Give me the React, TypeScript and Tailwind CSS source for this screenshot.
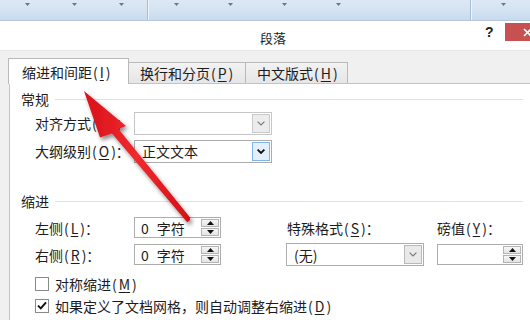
import React from 'react';

const Mn = ({ k }: { k: string }) => (
  <>
    <span className="ml-[1px] mr-[2px]">(</span>
    <u className="underline-offset-2 decoration-1">{k}</u>
    <span className="ml-[2px]">)</span>
  </>
);

const Chevron = ({ dark }: { dark?: boolean }) => (
  <svg width="8" height="5" viewBox="0 0 8 5">
    <path
      d="M0.6 0.6 L4 4 L7.4 0.6"
      fill="none"
      stroke={dark ? '#111' : '#7c7c7c'}
      strokeWidth={dark ? 1.8 : 1.2}
    />
  </svg>
);

const Tri = ({ up }: { up?: boolean }) => (
  <svg width="7" height="4" viewBox="0 0 7 4">
    <path d={up ? 'M0 4 L3.5 0 L7 4 Z' : 'M0 0 L3.5 4 L7 0 Z'} fill="#111" />
  </svg>
);

const Mark = () => (
  <svg width="5" height="3" viewBox="0 0 5 3">
    <path d="M0 0 L2.5 3 L5 0 Z" fill="#66768c" />
  </svg>
);

type SelVariant = 'disabled' | 'focus' | 'plain';

const Select = ({ text, variant }: { text?: string; variant: SelVariant }) => {
  const btn =
    variant === 'focus'
      ? 'bg-[#e3effb] border-[#7eb4ea]'
      : variant === 'disabled'
      ? 'bg-[#ececec] border-[#c9c9c9]'
      : 'bg-[#e9e9e9] border-[#b9b9b9]';
  return (
    <div
      className={`flex w-[138px] h-[23px] p-[1px] bg-white border ${
        variant === 'disabled' ? 'border-[#c6c6c6]' : 'border-[#acacac]'
      }`}
    >
      <div className="flex-1 flex items-center pl-[6px] text-[14px] leading-none">{text}</div>
      <div className={`w-[18px] h-full border flex items-center justify-center ${btn}`}>
        <Chevron dark={variant === 'focus'} />
      </div>
    </div>
  );
};

const Spin = ({ text, w }: { text?: React.ReactNode; w: string }) => (
  <div className={`flex ${w} h-[21px] p-[1px] bg-white border border-[#acacac]`}>
    <div className="flex-1 flex items-center pl-[5px] text-[14px] leading-none">{text}</div>
    <div className="w-[18px] flex flex-col gap-[1px]">
      <div className="flex-1 border border-[#b4b4b4] bg-gradient-to-b from-[#f6f6f6] to-[#e4e4e4] flex items-center justify-center">
        <Tri up />
      </div>
      <div className="flex-1 border border-[#b4b4b4] bg-gradient-to-b from-[#f6f6f6] to-[#e4e4e4] flex items-center justify-center">
        <Tri />
      </div>
    </div>
  </div>
);

const Heading = ({ label, className = '' }: { label: string; className?: string }) => (
  <div className={`flex items-center ml-[11px] w-[502px] h-[16px] ${className}`}>
    <span className="text-[14px] leading-none">{label}</span>
    <div className="flex-1 h-px bg-[#e2e2e2] ml-[6px]" />
  </div>
);

const Check = ({ checked, children, className = '' }: { checked?: boolean; children: React.ReactNode; className?: string }) => (
  <div className={`flex items-center h-[15px] ml-[25px] ${className}`}>
    <div className="w-[14px] h-[14px] border border-[#8a8a8a] bg-white flex items-center justify-center">
      {checked && (
        <svg width="10" height="9" viewBox="0 0 10 9">
          <path d="M1 4.6 L3.8 7.4 L9 1.3" fill="none" stroke="#111" strokeWidth="2" />
        </svg>
      )}
    </div>
    <span className="ml-[6px] text-[14px] leading-none">{children}</span>
  </div>
);

const zero = (
  <>
    0<span className="ml-[8px]">字符</span>
  </>
);

export default function App() {
  return (
    <div className="relative w-[530px] h-[320px] overflow-hidden bg-[#f0f0f0] text-[#1c1c1c] font-['Noto_Sans_CJK_SC','Noto_Sans',sans-serif]">
      {/* ribbon strip behind the dialog */}
      <div className="flex h-[21px] border-b border-[#b5c8df] bg-gradient-to-b from-[#dde8f5] via-[#d5e3f3] to-[#c8daee]">
        <div className="w-[148px] shrink-0 border-r border-[#a9bdd6] flex items-start pt-[3px] pl-[25px] gap-[42px]">
          <Mark /><Mark /><Mark />
        </div>
        <div className="w-[323px] shrink-0 border-l border-r border-l-[#eef4fb] border-r-[#a9bdd6] flex items-start pt-[3px] pl-[25px] gap-[49px]">
          <Mark /><Mark /><Mark /><Mark />
        </div>
        <div className="flex-1 border-l border-[#eef4fb] flex items-start pt-[3px] pl-[29px]">
          <Mark />
        </div>
      </div>

      {/* title bar */}
      <div className="flex items-start h-[30px] bg-white border-b border-[#e6e6e6]">
        <div className="flex-1 text-center pl-[61px] mt-[8px] text-[13px] leading-[18px]">段落</div>
        <div className="w-[10px] mr-[10px] mt-[4px] text-[14px] leading-[14px] font-bold text-[#222] font-['Liberation_Sans',sans-serif]">?</div>
        <div className="shrink-0 w-[46px] h-[18px] mt-[2px] mr-[-21px] bg-[#c75050] flex items-center pl-[18px]">
          <svg width="9" height="9" viewBox="0 0 9 9">
            <path d="M1 1 L8 8 M8 1 L1 8" stroke="#fff" strokeWidth="1.6" />
          </svg>
        </div>
      </div>

      {/* tabs */}
      <div className="flex items-end h-[32px] pl-[8px]">
        <div className="relative z-10 mb-[-1px] w-[121px] h-[26px] bg-white border border-b-0 border-[#b9b9b9] flex items-center pl-[13px] text-[14px] leading-none">
          缩进和间距<Mn k="I" />
        </div>
        <div className="w-[117px] h-[21px] bg-gradient-to-b from-[#f2f2f2] to-[#e6e6e6] border-t border-r border-[#b9b9b9] flex items-center pl-[11px] text-[14px] leading-none">
          换行和分页<Mn k="P" />
        </div>
        <div className="w-[102px] h-[21px] bg-gradient-to-b from-[#f2f2f2] to-[#e6e6e6] border-t border-r border-[#b9b9b9] flex items-center pl-[11px] text-[14px] leading-none">
          中文版式<Mn k="H" />
        </div>
      </div>

      {/* panel */}
      <div className="ml-[9px] w-[540px] h-[260px] bg-white border-l border-t border-[#c4c4c4] pt-[7px]">
        <Heading label="常规" />

        <div className="flex items-center ml-[25px] mt-[5px] h-[22px]">
          <div className="w-[99px] text-[14px] leading-none">对齐方式<Mn k="G" />：</div>
          <Select variant="disabled" />
        </div>
        <div className="flex items-center ml-[25px] mt-[6px] h-[22px]">
          <div className="w-[99px] text-[14px] leading-none">大纲级别<Mn k="O" />：</div>
          <Select variant="focus" text="正文文本" />
        </div>

        <Heading label="缩进" className="mt-[31px]" />

        <div className="grid grid-cols-[99px_152px_151px_86px] items-center ml-[25px] mt-[8px] h-[21px]">
          <div className="text-[14px] leading-none">左侧<Mn k="L" />：</div>
          <Spin w="w-[87px]" text={zero} />
          <div className="text-[14px] leading-none pl-[1px]">特殊格式<Mn k="S" />：</div>
          <div className="text-[14px] leading-none">磅值<Mn k="Y" />：</div>
        </div>
        <div className="grid grid-cols-[99px_152px_151px_86px] items-center ml-[25px] mt-[5px] h-[22px]">
          <div className="text-[14px] leading-none">右侧<Mn k="R" />：</div>
          <Spin w="w-[87px]" text={zero} />
          <Select variant="plain" text="(无)" />
          <Spin w="w-[86px]" />
        </div>

        <Check className="mt-[11px]">对称缩进<Mn k="M" /></Check>
        <Check checked className="mt-[7px]">
          如果定义了文档网格，则自动调整右缩进<Mn k="D" />
        </Check>

        <Heading label="间距" className="mt-[5px]" />
      </div>

      {/* red annotation arrow */}
      <svg className="absolute inset-0 pointer-events-none" width="530" height="320" viewBox="0 0 530 320">
        <defs>
          <filter id="sh" x="-20%" y="-20%" width="140%" height="140%">
            <feDropShadow dx="2" dy="3" stdDeviation="2" floodColor="#000" floodOpacity="0.45" />
          </filter>
          <linearGradient id="rg" x1="0" y1="0" x2="1" y2="0">
            <stop offset="0" stopColor="#d8101a" />
            <stop offset="0.5" stopColor="#f02a2e" />
            <stop offset="1" stopColor="#d20f16" />
          </linearGradient>
        </defs>
        <path
          d="M84 91 L126 126 L118.5 129 L190 217.5 Q190.5 221.5 187 222 L112 133.5 L100 137.5 Z"
          fill="url(#rg)"
          filter="url(#sh)"
        />
      </svg>
    </div>
  );
}
